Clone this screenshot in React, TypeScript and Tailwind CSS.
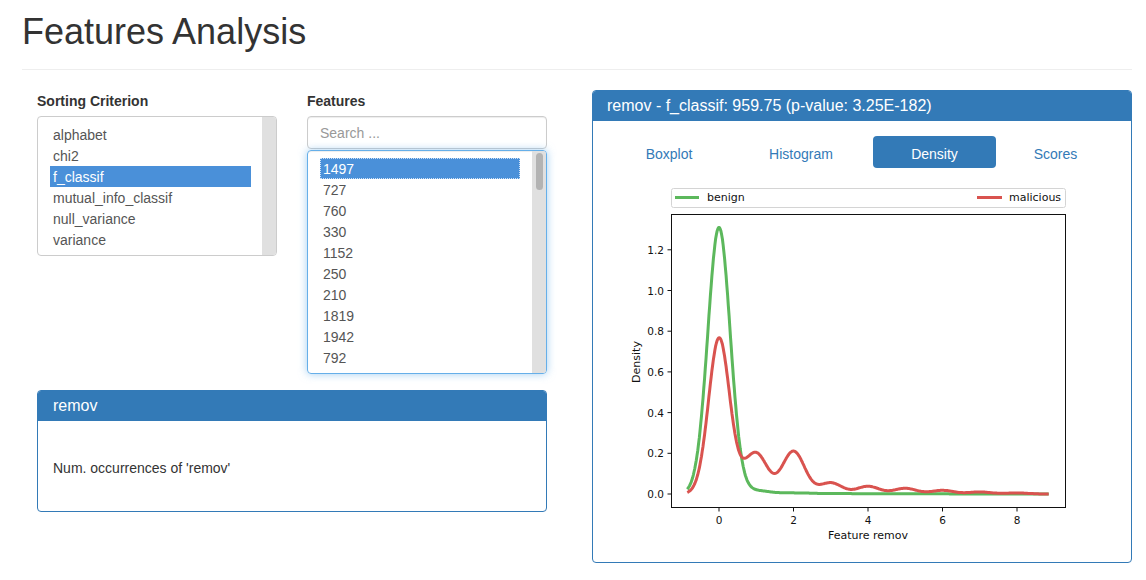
import { useState } from "react";

const criteria = ["alphabet", "chi2", "f_classif", "mutual_info_classif", "null_variance", "variance"];
const features = ["1497", "727", "760", "330", "1152", "250", "210", "1819", "1942", "792"];
const tabs = [
  { name: "Boxplot", cls: "w-[124px]" },
  { name: "Histogram", cls: "ml-[2px] w-[136px]" },
  { name: "Density", cls: "ml-[4px] w-[123px]" },
  { name: "Scores", cls: "ml-[2px] w-[115px]" },
];

// chart coords are page pixels (viewBox starts where the svg sits)
const px = (x: number) => 719 + x * 37.25;
const py = (y: number) => 494 - y * 203.5;
const g = (x: number, m: number, s: number) => Math.exp(-((x - m) ** 2) / (2 * s * s));

const benign = (x: number) =>
  1.31 * g(x, 0, 0.3) + 0.016 * g(x, 1, 0.35) + 0.005 * g(x, 2, 0.4) + 0.002 * g(x, 3, 0.5) + 0.001 * g(x, 5, 1.5);

const malTail = [0, 0.195, 0.21, 0.055, 0.038, 0.028, 0.018, 0.01, 0.005];
const malicious = (x: number) =>
  0.76 * g(x, 0, 0.28) +
  0.03 * g(x, 0.5, 0.3) +
  malTail.reduce((acc, h, k) => acc + h * g(x, k, 0.3), 0);

function curve(f: (x: number) => number) {
  const pts: string[] = [];
  for (let x = -0.85; x <= 8.851; x += 0.02) {
    pts.push(`${px(x).toFixed(1)},${py(f(x)).toFixed(1)}`);
  }
  return "M" + pts.join("L");
}

function DensityChart() {
  const yTicks = [0, 0.2, 0.4, 0.6, 0.8, 1.0, 1.2];
  const xTicks = [0, 2, 4, 6, 8];
  return (
    <svg width="538" height="372" viewBox="593 180 538 372" className="block font-['DejaVu_Sans',sans-serif]">
      <defs>
        <clipPath id="axes">
          <rect x="672" y="215" width="393" height="292" />
        </clipPath>
      </defs>
      <rect x="671.5" y="188.5" width="394" height="19" rx="2" fill="#fff" stroke="#d4d4d4" />
      <line x1="675" y1="197.5" x2="699" y2="197.5" stroke="#5cb85c" strokeWidth="3" />
      <text x="707" y="197.5" fontSize="11" fill="#111" dominantBaseline="central">benign</text>
      <line x1="977" y1="197.5" x2="1002" y2="197.5" stroke="#d9534f" strokeWidth="3" />
      <text x="1009" y="197.5" fontSize="11" fill="#111" dominantBaseline="central">malicious</text>

      <g clipPath="url(#axes)">
        <path d={curve(benign)} fill="none" stroke="#5cb85c" strokeWidth="3" strokeLinejoin="round" />
        <path d={curve(malicious)} fill="none" stroke="#d9534f" strokeWidth="3" strokeLinejoin="round" />
      </g>
      <rect x="671.5" y="214.5" width="394" height="293" fill="none" stroke="#111" />

      {yTicks.map((v) => (
        <g key={v}>
          <line x1="667.5" y1={py(v)} x2="671" y2={py(v)} stroke="#111" />
          <text x="664" y={py(v)} fontSize="10.5" fill="#111" textAnchor="end" dominantBaseline="central">
            {v.toFixed(1)}
          </text>
        </g>
      ))}
      {xTicks.map((v) => (
        <g key={v}>
          <line x1={px(v)} y1="508" x2={px(v)} y2="511.5" stroke="#111" />
          <text x={px(v)} y="520" fontSize="10.5" fill="#111" textAnchor="middle" dominantBaseline="central">
            {v}
          </text>
        </g>
      ))}
      <text x="868" y="535" fontSize="11" fill="#111" textAnchor="middle" dominantBaseline="central">
        Feature remov
      </text>
      <text
        x="636"
        y="362"
        fontSize="11"
        fill="#111"
        textAnchor="middle"
        dominantBaseline="central"
        transform="rotate(-90 636 362)"
      >
        Density
      </text>
    </svg>
  );
}

export default function App() {
  const [criterion, setCriterion] = useState("f_classif");
  const [feature, setFeature] = useState("1497");
  const [tab, setTab] = useState("Density");

  return (
    <div className="font-['Liberation_Sans',Arial,sans-serif] text-[14px] text-[#333] pl-[22px] pr-[14px] bg-white min-h-[580px]">
      <h1 className="text-[36px] leading-[40px] font-medium pt-[12px] pb-[17px] border-b border-[#eee]">
        Features Analysis
      </h1>

      <div className="flex items-start">
        <div className="ml-[15px] pt-[21px] w-[510px]">
          <div className="flex gap-[30px]">
            <div className="w-[240px]">
              <div className="font-bold leading-[20px] mb-[5px]">Sorting Criterion</div>
              <div className="h-[140px] border border-[#ccc] rounded-[4px] flex overflow-hidden">
                <div className="flex-1 pl-[12px] pr-[11px] pt-[7px] text-[#555]">
                  {criteria.map((c) => (
                    <div
                      key={c}
                      onClick={() => setCriterion(c)}
                      className={
                        c === criterion
                          ? "h-[21px] leading-[23px] px-[3px] bg-[#4a90d9] text-white"
                          : "h-[21px] leading-[23px] px-[3px]"
                      }
                    >
                      {c}
                    </div>
                  ))}
                </div>
                <div className="w-[14px] bg-[#e0e0e0]" />
              </div>
            </div>

            <div className="w-[240px]">
              <div className="font-bold leading-[20px] mb-[5px]">Features</div>
              <div className="h-[33px] border border-[#ccc] rounded-[4px] px-[12px] flex items-center pt-[2px] text-[#999] shadow-[inset_0_1px_1px_rgba(0,0,0,0.075)]">
                Search ...
              </div>
              <div className="mt-[1px] h-[224px] border border-[#66afe9] rounded-[4px] flex overflow-hidden shadow-[inset_0_1px_1px_rgba(0,0,0,0.075),0_0_8px_rgba(102,175,233,0.6)]">
                <div className="flex-1 pl-[12px] pr-[12px] pt-[7px] text-[#555]">
                  {features.map((f) => (
                    <div
                      key={f}
                      onClick={() => setFeature(f)}
                      className={
                        f === feature
                          ? "h-[21px] leading-[23px] px-[3px] bg-[#4a90d9] text-white outline-1 outline-dotted outline-[#cfe2f7] -outline-offset-1"
                          : "h-[21px] leading-[23px] px-[3px]"
                      }
                    >
                      {f}
                    </div>
                  ))}
                </div>
                <div className="w-[14px] bg-[#e0e0e0] pt-[2px] flex justify-center">
                  <div className="w-[7px] h-[37px] rounded-full bg-[#b3b3b3]" />
                </div>
              </div>
            </div>
          </div>

          <div className="mt-[16px] border border-[#337ab7] rounded-[4px] overflow-hidden">
            <div className="h-[30px] bg-[#337ab7] text-white text-[16px] px-[15px] flex items-center">remov</div>
            <div className="h-[90px] px-[15px] pt-[37px] leading-[20px]">Num. occurrences of 'remov'</div>
          </div>
        </div>

        <div className="ml-[45px] mt-[20px] w-[540px] border border-[#337ab7] rounded-[4px] overflow-hidden">
          <div className="h-[30px] bg-[#337ab7] text-white text-[16px] px-[14px] flex items-center">
            remov - f_classif: 959.75 (p-value: 3.25E-182)
          </div>
          <div className="pl-[14px] pt-[15px] pb-[10px]">
            <div className="flex">
              {tabs.map((t) => (
                <button
                  key={t.name}
                  onClick={() => setTab(t.name)}
                  className={
                    t.name === tab
                      ? `${t.cls} h-[32px] pt-[4px] rounded-[4px] bg-[#337ab7] text-white`
                      : `${t.cls} h-[32px] pt-[4px] rounded-[4px] text-[#337ab7]`
                  }
                >
                  {t.name}
                </button>
              ))}
            </div>
            <div className="-ml-[14px] mt-[12px]">
              <DensityChart />
            </div>
          </div>
        </div>
      </div>
    </div>
  );
}
